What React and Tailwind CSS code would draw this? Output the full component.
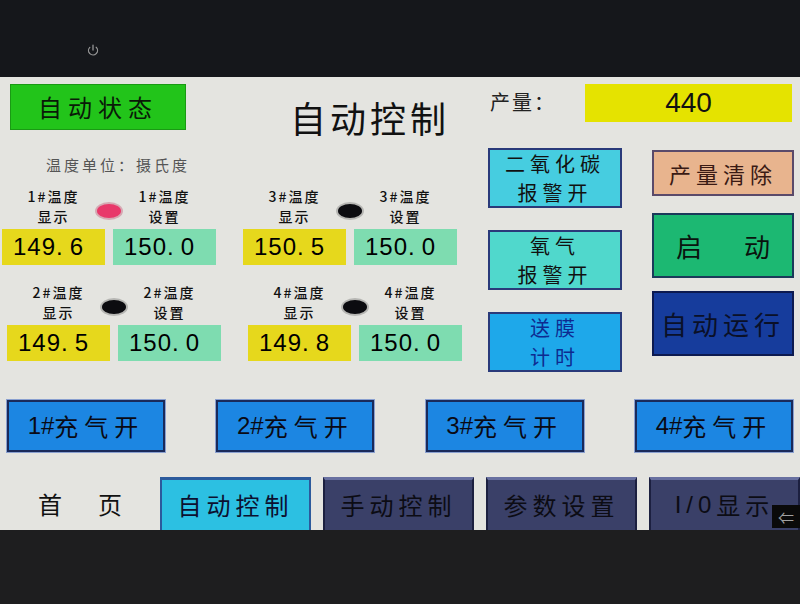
import { Power } from "lucide-react";

const cjk = { fontFamily: '"Noto Sans CJK SC", "Noto Sans", sans-serif' };
const num = { fontFamily: '"Liberation Sans", Arial, sans-serif' };

function Value({ text, bg }) {
  const [a, b] = text.split(".");
  return (
    <div
      className={`h-[36px] w-[103px] flex items-center pl-[11px] text-[24px] text-black ${bg}`}
      style={num}
    >
      <span className="tracking-[1px]">{a}</span>
      <span className="pr-[7px]">.</span>
      <span>{b}</span>
    </div>
  );
}

function Lamp({ on }) {
  return (
    <div className="w-2 flex justify-center">
      <div
        className={`shrink-0 mt-[9px] w-[24px] h-[14px] rounded-[50%] ${
          on
            ? "bg-[#e8386a] ring-2 ring-[#c05070]/40"
            : "bg-[#0c0c10] ring-2 ring-black/20"
        }`}
      />
    </div>
  );
}

function TempGroup({ n, cur, set, on }) {
  return (
    <div className="flex flex-col">
      <div className="flex items-center h-[40px] text-[14px] leading-[20px] tracking-[2px] font-medium text-[#111]">
        <div className="w-[103px] text-center">
          <div>{n}#温度</div>
          <div>显示</div>
        </div>
        <Lamp on={on} />
        <div className="w-[103px] text-center">
          <div>{n}#温度</div>
          <div>设置</div>
        </div>
      </div>
      <div className="flex gap-2 mt-[3px]">
        <Value text={cur} bg="bg-[#e6d81c]" />
        <Value text={set} bg="bg-[#7edcb0]" />
      </div>
    </div>
  );
}

function SideBtn({ lines, bg, color = "text-[#111]", className = "" }) {
  return (
    <div
      className={`flex flex-col items-center justify-center border-2 border-[#2a3a7a] text-[20px] leading-[29px] tracking-[5px] ${bg} ${color} ${className}`}
    >
      {lines.map((l) => (
        <div key={l}>{l}</div>
      ))}
    </div>
  );
}

function GasBtn({ n }) {
  return (
    <div className="w-[158px] h-[52px] bg-[#1c86e2] border-2 border-[#1a2a5a] outline outline-1 outline-[#8aa0d0] flex items-center justify-center text-[24px] text-[#0a0a14]">
      <span style={num}>{n}#</span>
      <span className="tracking-[6px]">充气开</span>
    </div>
  );
}

function NavBtn({ label, active }) {
  return (
    <div
      className={`w-[151px] h-[53px] flex items-center justify-center text-[24px] tracking-[5px] border-t-[3px] border-x-2 ${
        active
          ? "bg-[#2cc0e2] border-[#2c5a9c] text-[#0c1030]"
          : "bg-[#3a4068] border-t-[#6870a0] border-x-[#1c2040] text-[#0c0c14]"
      }`}
    >
      {label}
    </div>
  );
}

export default function App() {
  return (
    <div className="w-[800px] h-[604px] flex flex-col bg-[#1e1e1f] overflow-hidden" style={cjk}>
      <div className="h-[77px] bg-[#15171b] flex items-start">
        <Power size={12} strokeWidth={2.5} className="ml-[87px] mt-[44px] text-[#9a9a9a]" />
      </div>

      <div className="h-[453px] bg-[#e4e4e0] flex flex-col">
        {/* header */}
        <div className="h-[71px] flex items-start">
          <div className="ml-[10px] mt-[7px] w-[176px] h-[46px] bg-[#22c41a] border border-[#1a9a14] flex items-center justify-center text-[24px] tracking-[6px] text-[#0a1a08]">
            自动状态
          </div>
          <div className="ml-[104px] mt-[17px] w-[180px] text-[36px] leading-[46px] tracking-[4px] text-[#111]">
            自动控制
          </div>
          <div className="ml-[20px] mt-[12px] w-[70px] text-[20px] leading-[26px] tracking-[2px] text-[#222]">
            产量：
          </div>
          <div
            className="ml-[25px] mt-[7px] w-[207px] h-[38px] bg-[#e5e300] flex items-center justify-center text-[28px] text-[#111]"
            style={num}
          >
            440
          </div>
        </div>

        {/* main */}
        <div className="h-[224px] flex items-start">
          <div className="w-[488px] flex flex-col">
            <div className="ml-[46px] mt-[8px] text-[15px] leading-[17px] tracking-[3px] text-[#555]">
              温度单位：摄氏度
            </div>
            <div className="flex gap-[27px] ml-[2px] mt-[13px]">
              <TempGroup n={1} cur="149.6" set="150.0" on />
              <TempGroup n={3} cur="150.5" set="150.0" />
            </div>
            <div className="flex gap-[27px] ml-[7px] mt-[17px]">
              <TempGroup n={2} cur="149.5" set="150.0" />
              <TempGroup n={4} cur="149.8" set="150.0" />
            </div>
          </div>

          <div className="w-[134px] flex flex-col gap-[22px]">
            <SideBtn lines={["二氧化碳", "报警开"]} bg="bg-[#46cde0]" className="h-[60px]" />
            <SideBtn lines={["氧气", "报警开"]} bg="bg-[#50d8cc]" className="h-[60px]" />
            <SideBtn
              lines={["送膜", "计时"]}
              bg="bg-[#1ea8ea]"
              color="text-[#0e2a90]"
              className="h-[60px]"
            />
          </div>

          <div className="ml-[30px] w-[142px] flex flex-col">
            <div className="mt-[2px] h-[46px] bg-[#e8b48e] border-2 border-[#5a4a6a] flex items-center justify-center text-[22px] tracking-[5px] text-[#3a1a14]">
              产量清除
            </div>
            <div className="mt-[17px] h-[65px] bg-[#1cb872] border-2 border-[#1a3a5a] flex items-center justify-between px-[22px] text-[26px] text-[#0a140e]">
              <span>启</span>
              <span>动</span>
            </div>
            <div className="mt-[13px] h-[65px] bg-[#163c9c] border-2 border-[#0c1a50] flex items-center justify-center text-[26px] tracking-[5px] text-[#0a1028]">
              自动运行
            </div>
          </div>
        </div>

        {/* gas row */}
        <div className="mt-[28px] h-[52px] px-[7px] flex justify-between">
          <GasBtn n={1} />
          <GasBtn n={2} />
          <GasBtn n={3} />
          <GasBtn n={4} />
        </div>

        {/* nav */}
        <div className="mt-[25px] h-[53px] flex items-end relative">
          <div className="w-[160px] h-full flex items-center justify-center gap-[36px] text-[24px] text-[#111]">
            <span>首</span>
            <span>页</span>
          </div>
          <div className="flex gap-[12px]">
            <NavBtn label="自动控制" active />
            <NavBtn label="手动控制" />
            <NavBtn label="参数设置" />
            <NavBtn label={<><span style={num}>I/0</span>显示</>} />
          </div>
          <div className="absolute right-0 bottom-[2px] w-[28px] h-[23px] bg-[#0a0a0a] flex items-center justify-center text-[16px] text-[#a0a0a0]">
            ⇐
          </div>
        </div>
      </div>
    </div>
  );
}
